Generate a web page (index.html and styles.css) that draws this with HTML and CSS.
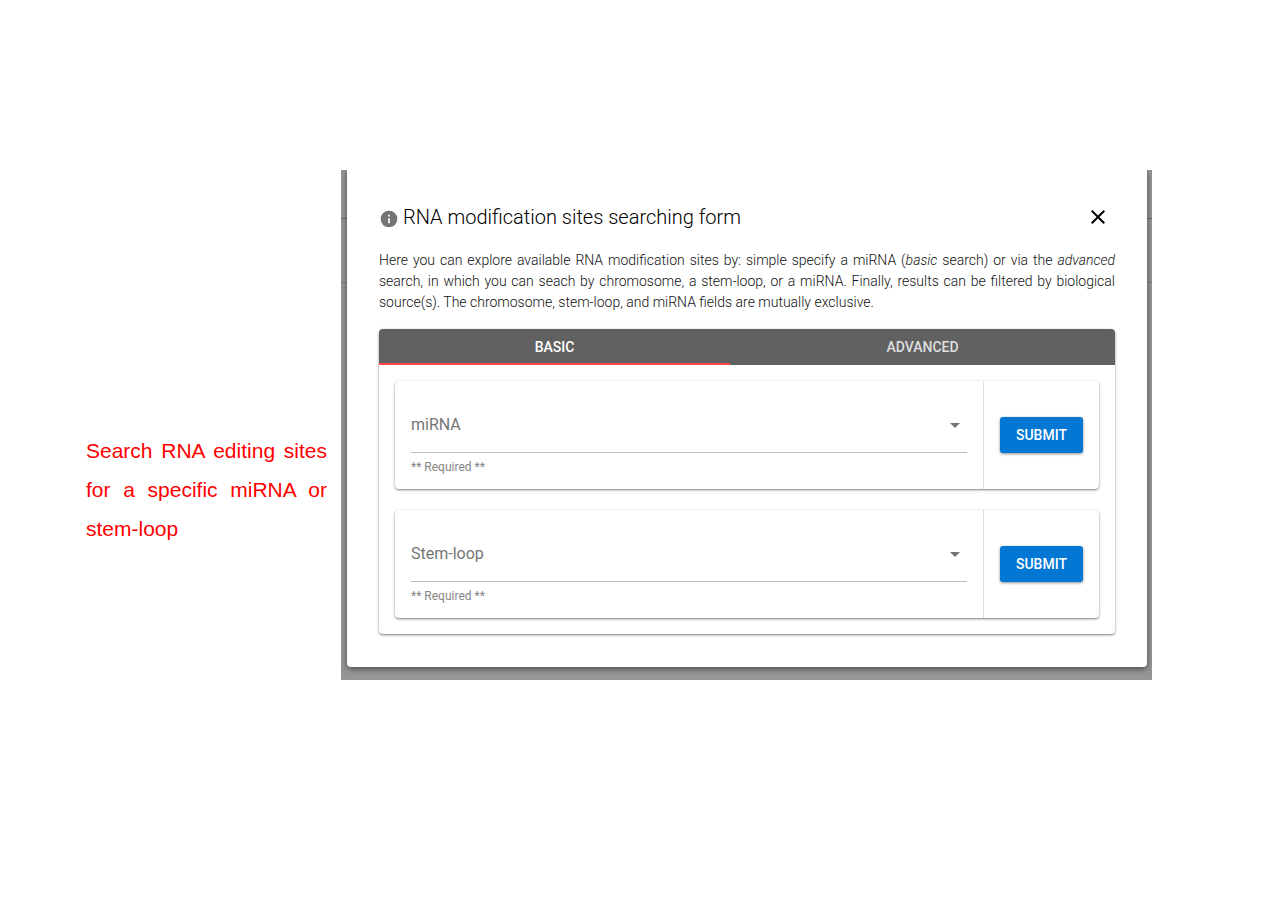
FILE: index.html
```html
<!DOCTYPE html>
<html lang="en">
<head>
<meta charset="utf-8">
<title>RNA modification sites searching form</title>
<link rel="stylesheet" href="styles.css">
</head>
<body>
<main class="page">
  <p class="callout">Search RNA editing sites for a specific miRNA or stem-loop</p>
  <div class="backdrop">
    <section class="dialog" role="dialog" aria-labelledby="dialog-title">
      <header class="dialog-header">
        <svg class="info-icon" viewBox="0 0 24 24" aria-hidden="true"><path d="M13 9h-2V7h2m0 10h-2v-6h2m-1-9A10 10 0 0 0 2 12a10 10 0 0 0 10 10 10 10 0 0 0 10-10A10 10 0 0 0 12 2z"/></svg>
        <h1 class="dialog-title" id="dialog-title">RNA modification sites searching form</h1>
        <button class="close" type="button" aria-label="Close">
          <svg class="close-icon" viewBox="0 0 24 24" aria-hidden="true"><path d="M19 6.41 17.59 5 12 10.59 6.41 5 5 6.41 10.59 12 5 17.59 6.41 19 12 13.41 17.59 19 19 17.59 13.41 12z"/></svg>
        </button>
      </header>
      <p class="intro">Here you can explore available RNA modification sites by: simple specify a miRNA (<em>basic</em> search) or via the <em>advanced</em> search, in which you can seach by chromosome, a stem-loop, or a miRNA. Finally, results can be filtered by biological source(s). The chromosome, stem-loop, and miRNA fields are mutually exclusive.</p>
      <div class="panel">
        <div class="tabs" role="tablist">
          <button class="tab tab-active" type="button" role="tab" aria-selected="true">BASIC</button>
          <button class="tab" type="button" role="tab" aria-selected="false">ADVANCED</button>
        </div>
        <div class="panel-body">
          <form class="search-card">
            <div class="field">
              <div class="select-wrap">
                <select class="select" id="mirna" aria-label="miRNA" aria-describedby="mirna-hint"><option>miRNA</option></select>
                <svg class="arrow" viewBox="0 0 24 24" aria-hidden="true"><path d="M7 10l5 5 5-5z"/></svg>
              </div>
              <span class="hint" id="mirna-hint">** Required **</span>
            </div>
            <div class="action"><button class="submit" type="button">SUBMIT</button></div>
          </form>
          <form class="search-card">
            <div class="field">
              <div class="select-wrap">
                <select class="select" id="stem-loop" aria-label="Stem-loop" aria-describedby="stem-hint"><option>Stem-loop</option></select>
                <svg class="arrow" viewBox="0 0 24 24" aria-hidden="true"><path d="M7 10l5 5 5-5z"/></svg>
              </div>
              <span class="hint" id="stem-hint">** Required **</span>
            </div>
            <div class="action"><button class="submit" type="button">SUBMIT</button></div>
          </form>
        </div>
      </div>
    </section>
  </div>
</main>
</body>
</html>
```

FILE: styles.css
```css
* { box-sizing: border-box; }

body {
  margin: 0;
  background: #fff;
  font-family: Roboto, sans-serif;
}

.page {
  display: flex;
  align-items: center;
  padding: 170px 128px 170px 86px;
}

.callout {
  flex: none;
  width: 241px;
  margin: 128px 14px 0 0;
  color: #f00;
  font-family: "Liberation Sans", Arial, sans-serif;
  font-size: 21px;
  line-height: 39px;
  text-align: justify;
}

.backdrop {
  flex: 1;
  min-width: 0;
  overflow: hidden;
  padding: 0 5px 13px 6px;
  background:
    linear-gradient(#686868, #686868) 0 48px / 100% 1px no-repeat,
    linear-gradient(#808080, #808080) 0 112px / 100% 1px no-repeat,
    #969696;
}

.dialog {
  padding: 35px 32px 33px;
  border-radius: 0 0 4px 4px;
  background: #fff;
  box-shadow: 0 2px 6px rgba(0, 0, 0, .5);
}

.dialog-header {
  display: flex;
  align-items: center;
  height: 24px;
}

.info-icon {
  flex: none;
  width: 20px;
  height: 20px;
  margin: 4px 4px 0 0;
  fill: #757575;
}

.dialog-title {
  flex: 1;
  margin: 0;
  color: #000;
  font-size: 20px;
  font-weight: 300;
  line-height: 24px;
}

.close {
  width: 24px;
  height: 24px;
  margin-right: 5px;
  padding: 0;
  border: 0;
  background: none;
}

.close-icon {
  display: block;
  width: 24px;
  height: 24px;
  fill: #000;
}

.intro {
  margin: 21px 0 16px;
  color: #111;
  font-size: 14px;
  font-weight: 300;
  line-height: 21px;
  text-align: justify;
}

.panel,
.search-card {
  border-radius: 4px;
  background: #fff;
  box-shadow: 0 1px 3px rgba(0, 0, 0, .4), 0 1px 1px rgba(0, 0, 0, .15);
}

.tabs {
  display: grid;
  grid-template-columns: 351fr 385fr;
  height: 36px;
  overflow: hidden;
  border-radius: 4px 4px 0 0;
  background: #616161;
}

.tab {
  padding: 0;
  border: 0;
  background: none;
  color: #dfdfdf;
  font: 500 14px/36px Roboto, sans-serif;
}

.tab-active {
  color: #fff;
  box-shadow: inset 0 -2px #ff4543;
}

.panel-body {
  display: grid;
  gap: 21px;
  padding: 16px;
}

.search-card {
  display: flex;
  height: 108px;
}

.field {
  flex: 1;
  padding: 16px;
}

.select-wrap {
  position: relative;
  border-bottom: 1px solid #bdbdbd;
}

.select {
  display: block;
  width: 100%;
  height: 55px;
  padding: 0;
  border: 0;
  appearance: none;
  background: none;
  color: #757575;
  font: 400 16px/24px Roboto, sans-serif;
}

.arrow {
  position: absolute;
  top: 16px;
  right: 0;
  width: 24px;
  height: 24px;
  fill: #757575;
  pointer-events: none;
}

.hint {
  display: block;
  padding-top: 6px;
  color: #858585;
  font-size: 12px;
  line-height: 16px;
}

.action {
  display: flex;
  align-items: center;
  padding: 0 16px;
  border-left: 1px solid #e0e0e0;
}

.submit {
  width: 83px;
  height: 36px;
  padding: 0;
  border: 0;
  border-radius: 3px;
  background: #0277d3;
  box-shadow: 0 1px 3px rgba(0, 0, 0, .45);
  color: #fff;
  font: 500 14px/36px Roboto, sans-serif;
}
```
